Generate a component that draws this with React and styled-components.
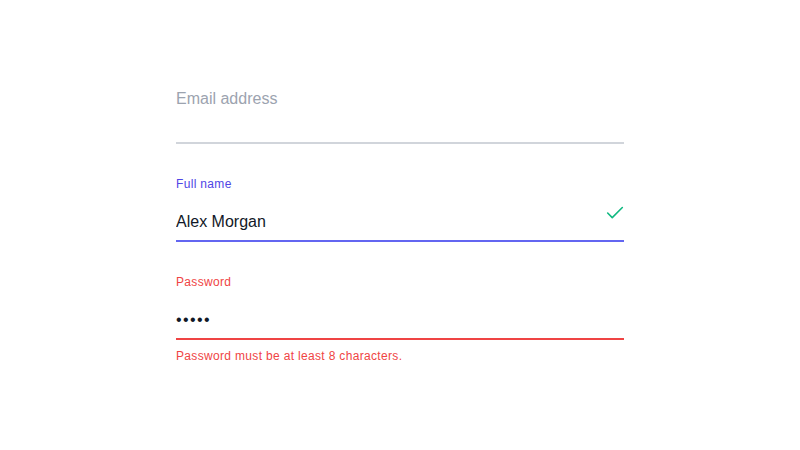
import React from "react";
import styled, { createGlobalStyle } from "styled-components";
import { Check } from "lucide-react";

const Global = createGlobalStyle`
  html, body { margin: 0; padding: 0; background: #ffffff; }
  body { font-family: "Liberation Sans", Arial, sans-serif; }
  * { box-sizing: border-box; }
`;

const tones = {
  idle: { label: "#9ca3af", line: "#d1d5db" },
  active: { label: "#4f46e5", line: "#6366f1" },
  error: { label: "#ef4444", line: "#ef4444" },
};

const Page = styled.div`
  width: 800px;
  height: 450px;
  display: flex;
  justify-content: center;
  padding-top: 78px;
`;

const Form = styled.form`
  width: 448px;
  display: flex;
  flex-direction: column;
  gap: 32px;
`;

const FieldWrap = styled.div`
  display: flex;
  flex-direction: column;
`;

const Field = styled.div`
  position: relative;
  padding-top: 20px;
`;

const Label = styled.label`
  position: absolute;
  left: 0;
  top: ${(p) => (p.$resting ? "9px" : "0")};
  font-size: ${(p) => (p.$resting ? "16px" : "12px")};
  line-height: ${(p) => (p.$resting ? "24px" : "16px")};
  letter-spacing: ${(p) => (p.$resting ? "normal" : "0.33px")};
  color: ${(p) => tones[p.$tone].label};
  pointer-events: none;
`;

const Input = styled.input`
  display: block;
  width: 100%;
  height: 46px;
  margin: 0;
  padding: 14px 28px 6px 0;
  border: none;
  border-bottom: 2px solid ${(p) => tones[p.$tone].line};
  border-radius: 0;
  outline: none;
  background: transparent;
  font-family: "Liberation Sans", Arial, sans-serif;
  font-size: 16px;
  line-height: 24px;
  color: #111827;
  letter-spacing: ${(p) => (p.$masked ? "1.4px" : "normal")};
`;

const Status = styled.span`
  position: absolute;
  right: -2px;
  top: 26px;
  display: flex;
  color: #10b981;
`;

const ErrorText = styled.p`
  margin: 8px 0 0;
  font-size: 12px;
  line-height: 16px;
  letter-spacing: 0.33px;
  color: #ef4444;
`;

export default function App() {
  return (
    <>
      <Global />
      <Page>
        <Form onSubmit={(e) => e.preventDefault()}>
          <FieldWrap>
            <Field>
              <Label htmlFor="email" $tone="idle" $resting>
                Email address
              </Label>
              <Input id="email" type="email" $tone="idle" readOnly />
            </Field>
          </FieldWrap>
          <FieldWrap>
            <Field>
              <Label htmlFor="name" $tone="active">
                Full name
              </Label>
              <Input id="name" $tone="active" defaultValue="Alex Morgan" readOnly />
              <Status>
                <Check size={22} strokeWidth={1.75} />
              </Status>
            </Field>
          </FieldWrap>
          <FieldWrap>
            <Field>
              <Label htmlFor="password" $tone="error">
                Password
              </Label>
              <Input id="password" $tone="error" $masked defaultValue="•••••" readOnly />
            </Field>
            <ErrorText>Password must be at least 8 characters.</ErrorText>
          </FieldWrap>
        </Form>
      </Page>
    </>
  );
}
